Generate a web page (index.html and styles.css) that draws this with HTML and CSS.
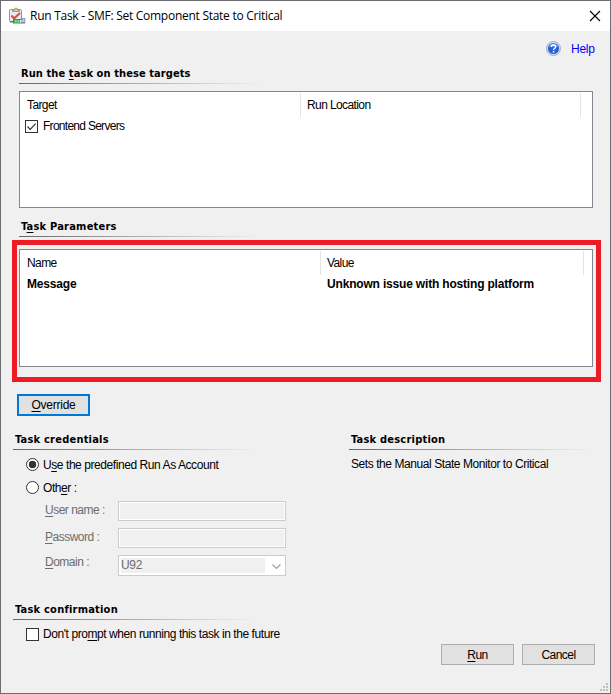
FILE: index.html
```html
<!DOCTYPE html>
<html lang="en">
<head>
<meta charset="utf-8">
<title>Run Task - SMF: Set Component State to Critical</title>
<link rel="stylesheet" href="styles.css">
</head>
<body>
<div class="window">
  <header class="titlebar">
    <svg class="app-icon" width="18" height="18" viewBox="0 0 18 18">
      <rect x="1.500" y="2.500" width="12" height="12" rx="1" fill="#e4eafa" stroke="#8a94b3"/>
      <path d="M2 14h12v1.500H2z" fill="#626f91"/>
      <path d="M4.500 4.500V3h2q0-2 1.500-2t1.500 2h2v1.500z" fill="#d9c789" stroke="#a18b4c" stroke-width=".8"/>
      <path d="M3.500 8.500l2.500 3 6-5.500" fill="none" stroke="#e8452c" stroke-width="2"/>
      <rect x="5.500" y="12.500" width="11" height="3.500" fill="#edf4ed" stroke="#577790"/>
      <path d="M6 13h1.500v3H6zm2.300 0h1.500v3H8.300zm2.200 0H12v3h-1.500z" fill="#22c935"/>
      <path d="M14 11.500h3v4h-3z" fill="#c2d4ec" stroke="#6680a0" stroke-width=".7"/>
    </svg>
    <h1 class="title">Run Task - SMF: Set Component State to Critical</h1>
    <svg class="close" width="12" height="12" viewBox="0 0 12 12"><path d="M1 1l10 10M11 1L1 11" fill="none" stroke="#000" stroke-width="1.100"/></svg>
  </header>
  <main class="content">
    <div class="help">
      <svg width="15" height="15" viewBox="0 0 15 15">
        <circle cx="7.500" cy="7.500" r="6.900" fill="#e5edf8" stroke="#8b9bb5" stroke-width=".9"/>
        <circle cx="7.500" cy="7.500" r="5.600" fill="#2862d0"/>
        <path d="M3 6Q4 2.500 7.500 2.500T12 6Q7 5 3 6z" fill="#77a2ea"/>
        <path d="M5.400 6q0-2 2.100-2t2.100 1.900q0 1-1.200 1.600-.9.500-.9 1.500" fill="none" stroke="#fff" stroke-width="1.400"/>
        <rect x="6.800" y="10" width="1.500" height="1.500" fill="#fff"/>
      </svg>
      <a class="help-link">Help</a>
    </div>
    <section class="targets">
      <h2 class="heading wide">Run the <u>t</u>ask on these targets</h2>
      <div class="list list-targets">
        <div class="list-head"><span>Target</span><span>Run Location</span></div>
        <div class="list-row"><svg class="check" width="13" height="13" viewBox="0 0 13 13"><rect x=".5" y=".5" width="12" height="12" fill="#fff" stroke="#333"/><path d="M2.500 6.500l2.700 2.800 5.500-5.600" fill="none" stroke="#333" stroke-width="1.200"/></svg><span>Frontend Servers</span></div>
      </div>
    </section>
    <section class="parameters">
      <h2 class="heading">T<u>a</u>sk Parameters</h2>
      <div class="highlight">
        <div class="list list-params">
          <div class="list-head"><span>Name</span><span>Value</span></div>
          <div class="param-row"><b>Message</b><b>Unknown issue with hosting platform</b></div>
        </div>
      </div>
    </section>
    <button class="button override"><u>O</u>verride</button>
    <div class="columns">
      <section class="credentials">
        <h2 class="heading">Task credentials</h2>
        <div class="option first"><i class="radio on"></i><span>U<u>s</u>e the predefined Run As Account</span></div>
        <div class="option second"><i class="radio"></i><span>Oth<u>e</u>r :</span></div>
        <div class="field"><label><u>U</u>ser name :</label><div class="input"></div></div>
        <div class="field"><label><u>P</u>assword :</label><div class="input"></div></div>
        <div class="field domain"><label><u>D</u>omain :</label><div class="input select"><span>U92</span><svg width="18" height="17" viewBox="0 0 18 17"><path d="M7.500 6.500l4 4 4-4" fill="none" stroke="#a0a0a0" stroke-width="1.200"/></svg></div></div>
      </section>
      <section class="description">
        <h2 class="heading">Task description</h2>
        <p>Sets the Manual State Monitor to Critical</p>
      </section>
    </div>
    <section class="confirmation">
      <h2 class="heading">Task confirmation</h2>
      <div class="option first"><svg class="check" width="13" height="13" viewBox="0 0 13 13"><rect x=".5" y=".5" width="12" height="12" fill="#fff" stroke="#333"/></svg><span class="prompt">Don't pro<u>m</u>pt when running this task in the future</span></div>
    </section>
    <footer class="actions"><button class="button">
<u>R</u>un</button><button class="button">Cancel</button></footer>
  </main>
  <svg class="grip" width="8" height="8" viewBox="0 0 8 8" fill="#bfbfbf"><path d="M6 0h2v2H6zM3 3h2v2H3zM6 3h2v2H6zM0 6h2v2H0zM3 6h2v2H3zM6 6h2v2H6z"/></svg>
</div>
</body>
</html>
```
FILE: styles.css
```css
* { box-sizing: border-box; }
body { margin: 0; font: 12px/14px "Liberation Sans", Arial, sans-serif; letter-spacing: -.43px; color: #000; }
h1, h2, p { margin: 0; }
u { text-decoration-thickness: 1px; text-underline-offset: 2px; text-decoration-skip-ink: none; }
span, label, b, p, h1, h2, a { white-space: nowrap; }
.window { position: relative; width: 611px; height: 694px; border: 1px solid #6d6c70; background: #f0f0f0; overflow: hidden; }
.titlebar { display: flex; align-items: center; height: 30px; background: #fff; padding: 0 9px 0 7px; }
.title { font: 12px/16px "Open Sans", sans-serif; margin-left: 4px; letter-spacing: -.27px; }
.close { margin-left: auto; }
.help { display: flex; align-items: center; height: 15px; margin: 10px 15px 0 545px; gap: 10px; }
.help-link { color: #00f; letter-spacing: -.25px; }
.heading { width: 243px; height: 19px; padding-left: 2px; font: bold 11px/17px "DejaVu Sans Condensed", "DejaVu Sans", sans-serif; letter-spacing: .22px; background: linear-gradient(90deg, #666, #999 35%, #d0d0d0 75%, #f0f0f0) left bottom / 100% 1px no-repeat; }
.heading.wide { letter-spacing: .09px; }
.targets { margin: 9px 0 0 18px; }
.list { width: 574px; border: 1px solid #828790; background: #fff; }
.list-targets { height: 117px; margin-top: 7px; }
.list-head { display: grid; grid-template-columns: 281px 280px; height: 25px; padding-top: 1px; line-height: 24px; letter-spacing: -.6px; }
.list-head span { border-right: 1px solid #e5e5e5; padding-left: 7px; }
.list-head span + span { padding-left: 6px; }
.list-row { display: flex; align-items: center; gap: 5px; height: 18px; padding-left: 5px; letter-spacing: -.72px; }
.parameters { margin-top: 10px; }
.parameters .heading { margin-left: 18px; }
.highlight { width: 589px; height: 142px; margin: 3px 0 0 11px; border: 5px solid #ed1c24; padding: 4px 3px 10px 2px; }
.list-params { height: 118px; }
.list-params .list-head { grid-template-columns: 301px 263px; }
.param-row { display: grid; grid-template-columns: 300px 1fr; padding: 2px 0 0 7px; letter-spacing: -.18px; }
.button { display: block; width: 73px; height: 21px; border: 1px solid #adadad; background: #e1e1e1; padding: 0; font: inherit; letter-spacing: -.55px; color: #000; }
.override { height: 22px; border: 2px solid #0078d7; margin: 12px 0 0 16px; letter-spacing: -.25px; }
.columns { display: flex; margin: 15px 0 0 12px; height: 169px; }
.credentials { width: 336px; }
.description p { margin: 7px 0 0 2px; }
.option { display: flex; align-items: center; gap: 4px; height: 13px; padding-left: 13px; }
.option.first { margin-top: 8px; }
.option.second { margin: 10px 0 7px; }
.prompt { margin-top: -2px; }
.radio { width: 13px; height: 13px; border: 1px solid #333; border-radius: 50%; background: #fff; }
.radio.on { background: radial-gradient(circle, #333 3.500px, #fff 4.100px); }
.field { display: flex; height: 20px; margin-bottom: 7px; padding-left: 32px; color: #6d6d6d; letter-spacing: -.5px; }
.field label { width: 73px; line-height: 18px; }
.field.domain label { line-height: 15px; }
.input { width: 168px; height: 20px; border: 1px solid #ccc; background: #f0f0f0; box-shadow: inset 0 0 0 1px #fff; }
.select { display: flex; height: 21px; padding: 2px; background: #fff; }
.select span { width: 145px; line-height: 15px; background: #f0f0f0; letter-spacing: -.3px; }
.confirmation { margin: 1px 0 0 12px; }
.actions { display: flex; justify-content: flex-end; gap: 8px; margin: 3px 15px 0 0; }
.grip { position: absolute; right: 2px; bottom: 2px; }
```
